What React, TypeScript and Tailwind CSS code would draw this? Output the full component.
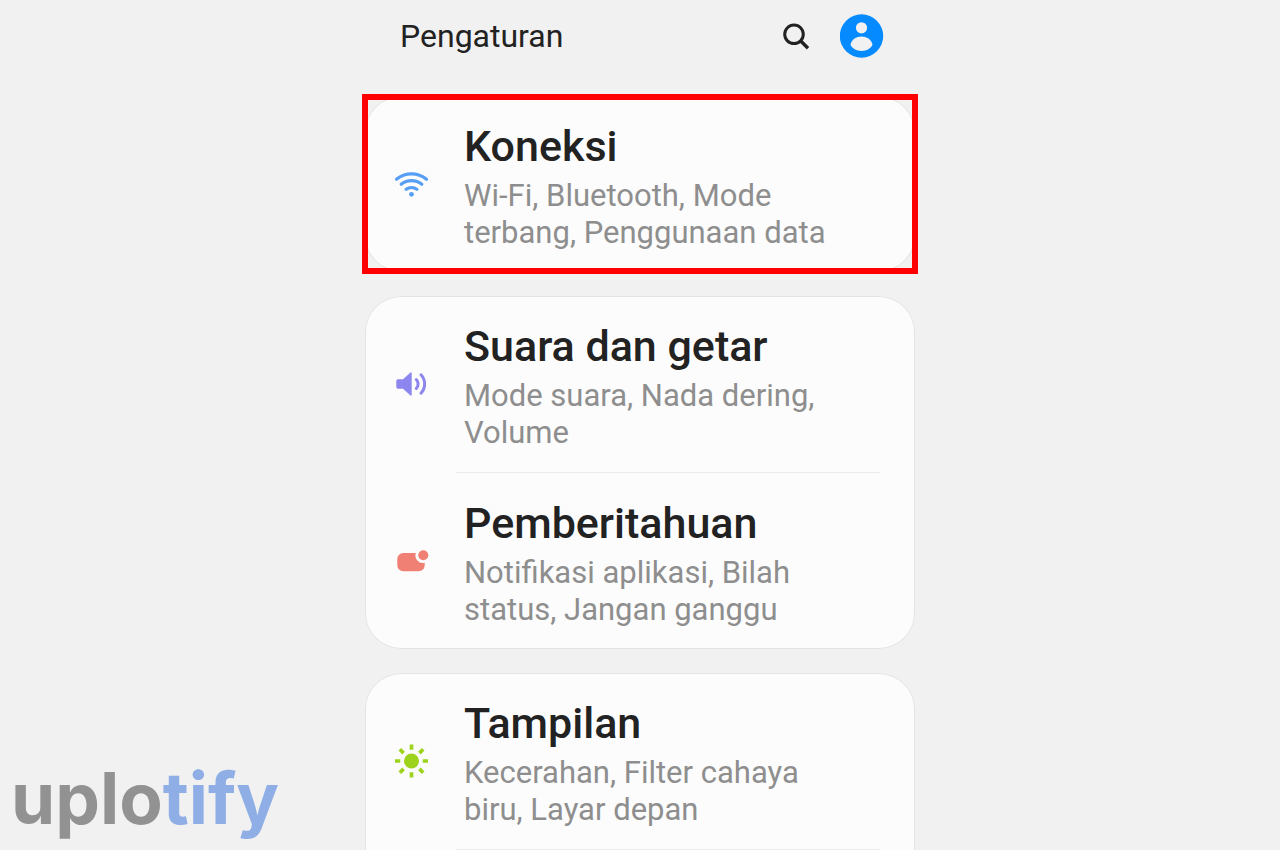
import type { ReactNode } from 'react'

type Setting = {
  title: string
  summary: [string, string]
  icon: ReactNode
}

function SearchIcon() {
  return (
    <svg className="size-7" viewBox="0 0 28 28" fill="none" stroke="#222" strokeWidth="3">
      <circle cx="12" cy="12.3" r="9.3" />
      <path d="M18.5 18.8 26 26.3" strokeWidth="3.4" />
    </svg>
  )
}

function AvatarIcon() {
  return (
    <svg className="size-11" viewBox="0 0 44 44">
      <circle cx="21.500" cy="22" r="21.700" fill="#058bff" />
      <circle cx="21.500" cy="13.800" r="5.600" fill="#f1f1f1" />
      <path d="M10.500 30.800c1-5.300 6-8.200 11-8.200s10 2.900 11 8.200C31 34.500 26.500 37 21.500 37s-9.500-2.500-11-6.200Z" fill="#f1f1f1" />
    </svg>
  )
}

function WifiIcon() {
  return (
    <svg className="size-9" viewBox="0 0 36 36" fill="none" stroke="#569ff5" strokeWidth="3.2" strokeLinecap="round">
      <path d="M2.500 13.200a24 24 0 0 1 30 0" />
      <path d="M7.200 18.300a16.500 16.500 0 0 1 20.600 0" />
      <path d="M12.100 23.300a9 9 0 0 1 10.800 0" />
      <circle cx="17.500" cy="28.300" r="2.400" fill="#569ff5" stroke="none" />
    </svg>
  )
}

function SoundIcon() {
  return (
    <svg className="size-9" viewBox="0 0 36 36" fill="none" stroke="#8e86ef" strokeWidth="3" strokeLinecap="round">
      <path
        d="M4 13.300h5l7.500-6.800c.6-.5 1.200-.3 1.200.5v22c0 .8-.6 1-1.200.5L9 22.700H4c-1 0-1.700-.7-1.700-1.700v-6c0-1 .7-1.700 1.700-1.700Z"
        fill="#8e86ef"
        stroke="none"
      />
      <path d="M22.300 13.500a6.500 6.500 0 0 1 0 9" />
      <path d="M27 8.800a13.500 13.500 0 0 1 0 18.400" />
    </svg>
  )
}

function NotificationIcon() {
  return (
    <svg className="size-9" viewBox="0 0 36 36" fill="#f08074">
      <path d="M9.300 10h12.500a7.600 7.600 0 0 0 8.900 9.800v2.500a6 6 0 0 1-6 6H9.300a6 6 0 0 1-6-6V16a6 6 0 0 1 6-6Z" />
      <circle cx="29.300" cy="12.200" r="5" />
    </svg>
  )
}

function DisplayIcon() {
  return (
    <svg className="size-9" viewBox="0 0 36 36" stroke="#9dd31d" strokeWidth="3.700">
      <circle cx="17.500" cy="18" r="7.500" fill="#9dd31d" stroke="none" />
      <path d="M17.500 1.500v5.300M17.500 29.200v5.300M1 18h5.300M28.700 18h5.300M5.800 6.300l3.800 3.800M25.400 25.900l3.800 3.800M5.800 29.700l3.800-3.800M25.400 10.100l3.800-3.800" />
    </svg>
  )
}

const connections: Setting = {
  title: 'Koneksi',
  summary: ['Wi-Fi, Bluetooth, Mode', 'terbang, Penggunaan data'],
  icon: <WifiIcon />,
}

const sound: Setting = {
  title: 'Suara dan getar',
  summary: ['Mode suara, Nada dering,', 'Volume'],
  icon: <SoundIcon />,
}

const notifications: Setting = {
  title: 'Pemberitahuan',
  summary: ['Notifikasi aplikasi, Bilah', 'status, Jangan ganggu'],
  icon: <NotificationIcon />,
}

const display: Setting = {
  title: 'Tampilan',
  summary: ['Kecerahan, Filter cahaya', 'biru, Layar depan'],
  icon: <DisplayIcon />,
}

function SettingRow({ setting }: { setting: Setting }) {
  return (
    <a href="#" className="flex items-center gap-[34px] pl-[29px]">
      {setting.icon}
      <div className="pt-[23px] pb-[21px]">
        <h2 className="text-[43px] leading-[54px] font-medium text-[#222]">{setting.title}</h2>
        <p className="mt-1 text-[31px] leading-[37px] text-[#8e8e8e]">
          {setting.summary[0]}
          <br />
          {setting.summary[1]}
        </p>
      </div>
    </a>
  )
}

function Card({ children }: { children: ReactNode }) {
  return (
    <section className="relative rounded-[36px] bg-[#fcfcfc] inset-ring inset-ring-[#e4e4e4]">{children}</section>
  )
}

function Divider() {
  return <hr className="mr-[35px] ml-[91px] border-[#ebebeb]" />
}

export default function App() {
  return (
    <div className="h-screen overflow-hidden bg-[#f1f1f1] font-[Roboto,sans-serif]">
      <main className="mx-auto max-w-[550px]">
        <header className="mb-6 flex h-[72px] items-center pr-[31px] pl-[35px]">
          <h1 className="flex-1 text-[32px] leading-10 text-[#222]">Pengaturan</h1>
          <button type="button" aria-label="Cari" className="mr-[30px]">
            <SearchIcon />
          </button>
          <button type="button" aria-label="Akun">
            <AvatarIcon />
          </button>
        </header>

        <div className="flex flex-col gap-6">
          <Card>
            <SettingRow setting={connections} />
            {/* Highlight */}
            <div className="pointer-events-none absolute -inset-x-[3px] -inset-y-0.5 border-6 border-[#f00]" />
          </Card>

          <Card>
            <SettingRow setting={sound} />
            <Divider />
            <SettingRow setting={notifications} />
          </Card>

          <Card>
            <SettingRow setting={display} />
            <Divider />
            <div className="h-24" />
          </Card>
        </div>
      </main>

      {/* Watermark */}
      <div className="fixed bottom-3 left-[11px] font-[Inter,sans-serif] text-[71px] leading-20 font-bold text-[#929292]">
        uplo<span className="text-[#8faee6]">tify</span>
      </div>
    </div>
  )
}
